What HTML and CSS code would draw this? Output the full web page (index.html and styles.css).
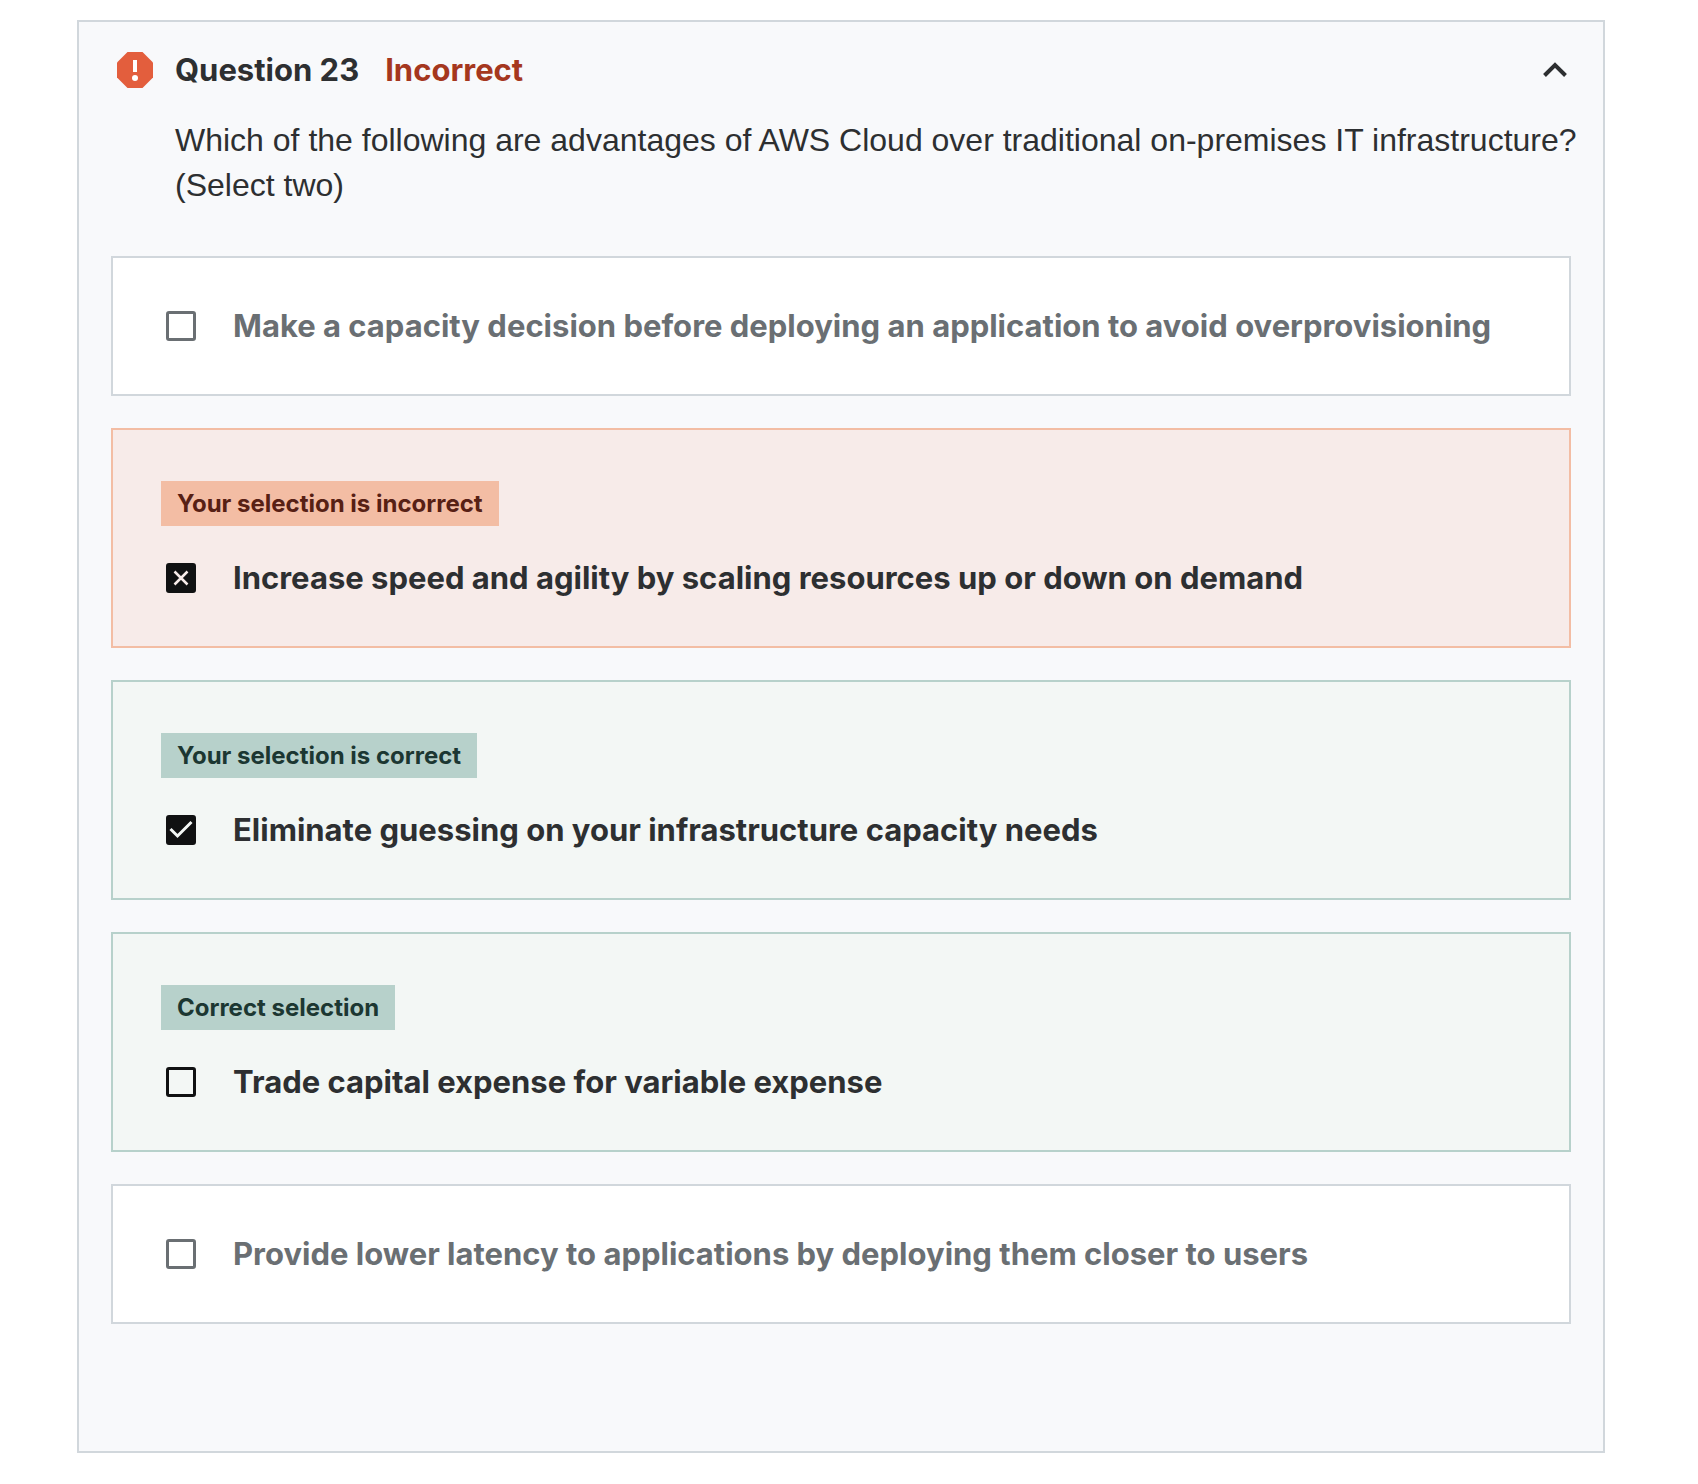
FILE: index.html
```html
<!DOCTYPE html>
<html lang="en">
<head>
  <meta charset="utf-8">
  <meta name="viewport" content="width=device-width, initial-scale=1">
  <title>Question 23</title>
  <link rel="stylesheet" href="styles.css">
</head>
<body>
  <main class="page">
    <section class="question">
      <header class="question-header">
        <svg class="status-icon" viewBox="0 0 36 36" aria-hidden="true">
          <path fill="#e35e3d" d="M10.500 0h15L36 10.500v15L25.500 36h-15L0 25.500v-15z"/>
          <path fill="#fff" d="M16 8h4v12h-4z"/>
          <circle fill="#fff" cx="18" cy="26" r="3"/>
        </svg>
        <h2 class="question-title">Question 23</h2>
        <span class="question-status">Incorrect</span>
        <button class="toggle" type="button" aria-label="Collapse question" aria-expanded="true">
          <svg class="toggle-icon" viewBox="0 0 24 16" aria-hidden="true">
            <path d="M1.500 13.500L12 3l10.500 10.500" fill="none" stroke="currentColor" stroke-width="4"/>
          </svg>
        </button>
      </header>
      <p class="question-text" id="prompt">Which of the following are advantages of AWS Cloud over traditional on-premises IT infrastructure? (Select two)</p>
      <ul class="options" aria-labelledby="prompt">
        <li class="option">
          <label class="choice">
            <span class="check"><input class="check-input" type="checkbox"></span>
            <span class="choice-text">Make a capacity decision before deploying an application to avoid overprovisioning</span>
          </label>
        </li>
        <li class="option option-marked option-incorrect">
          <span class="badge">Your selection is incorrect</span>
          <label class="choice">
            <span class="check">
              <input class="check-input" type="checkbox" checked>
              <svg class="check-mark" viewBox="0 0 30 30" aria-hidden="true"><path d="M8.500 8.500l13 13m0-13l-13 13" fill="none" stroke="#f7ebe9" stroke-width="2.500"/></svg>
            </span>
            <span class="choice-text">Increase speed and agility by scaling resources up or down on demand</span>
          </label>
        </li>
        <li class="option option-marked option-correct">
          <span class="badge">Your selection is correct</span>
          <label class="choice">
            <span class="check">
              <input class="check-input" type="checkbox" checked>
              <svg class="check-mark" viewBox="0 0 30 30" aria-hidden="true"><path d="M4.500 14l7 7L25.500 7" fill="none" stroke="#f3f7f5" stroke-width="3"/></svg>
            </span>
            <span class="choice-text">Eliminate guessing on your infrastructure capacity needs</span>
          </label>
        </li>
        <li class="option option-marked option-correct">
          <span class="badge">Correct selection</span>
          <label class="choice">
            <span class="check"><input class="check-input" type="checkbox"></span>
            <span class="choice-text">Trade capital expense for variable expense</span>
          </label>
        </li>
        <li class="option">
          <label class="choice">
            <span class="check"><input class="check-input" type="checkbox"></span>
            <span class="choice-text">Provide lower latency to applications by deploying them closer to users</span>
          </label>
        </li>
      </ul>
    </section>
  </main>
</body>
</html>
```
FILE: styles.css
```css
*,
*::before,
*::after {
  box-sizing: border-box;
}

body {
  margin: 0;
  background: #fff;
  color: #2d2f31;
  font-family: "Liberation Sans", Arial, sans-serif;
  font-size: 32px;
  line-height: 45px;
}

.page {
  padding: 20px 93px 30px 77px;
}

.question {
  padding: 25px 32px 127px;
  border: 2px solid #d1d7dc;
  background: #f8f9fb;
}

.question-header {
  display: flex;
  align-items: center;
  padding-left: 4px;
  font-family: Inter, sans-serif;
  font-size: 31px;
  font-weight: 700;
}

.status-icon {
  flex: none;
  width: 36px;
  height: 36px;
  margin: 0 22px 0 2px;
}

.question-title {
  margin: 0 26px 0 0;
  font-size: inherit;
  font-weight: inherit;
}

.question-status {
  color: #a5371e;
}

.toggle {
  display: flex;
  align-items: center;
  margin: 0 4px 0 auto;
  padding: 0;
  border: 0;
  background: none;
  color: #2d2f31;
  cursor: pointer;
}

.toggle-icon {
  width: 24px;
  height: 16px;
}

.question-text {
  margin: 26px -20px 0 64px;
}

.options {
  display: grid;
  gap: 32px;
  margin: 48px 0 0;
  padding: 0;
  list-style: none;
}

.option {
  padding: 48px;
  border: 2px solid #d1d7dc;
  background: #fff;
  color: #6a6f73;
}

.option-marked {
  padding-top: 51px;
  color: #2d2f31;
}

.option-incorrect {
  border-color: #f3bda4;
  background: #f7ebe9;
}

.option-correct {
  border-color: #b7d1cb;
  background: #f3f7f5;
}

.badge {
  display: block;
  width: fit-content;
  margin-bottom: 32px;
  padding: 0 16px;
  font-family: Inter, sans-serif;
  font-size: 24px;
  font-weight: 700;
}

.option-incorrect .badge {
  background: #f3bda4;
  color: #572014;
}

.option-correct .badge {
  background: #b7d1cb;
  color: #1c3732;
}

.choice {
  display: flex;
  align-items: center;
  gap: 37px;
  padding-left: 5px;
  font-family: Inter, sans-serif;
  font-size: 31px;
  font-weight: 700;
  line-height: 40px;
}

.check {
  display: grid;
  flex: none;
}

.check-input,
.check-mark {
  grid-area: 1 / 1;
  width: 30px;
  height: 30px;
}

.check-input {
  appearance: none;
  margin: 0;
  border: 3px solid #6a6f73;
  border-radius: 3px;
}

.option-marked .check-input {
  border-color: #101112;
}

.check-input:checked {
  background: #101112;
}

.check-mark {
  pointer-events: none;
}
```
